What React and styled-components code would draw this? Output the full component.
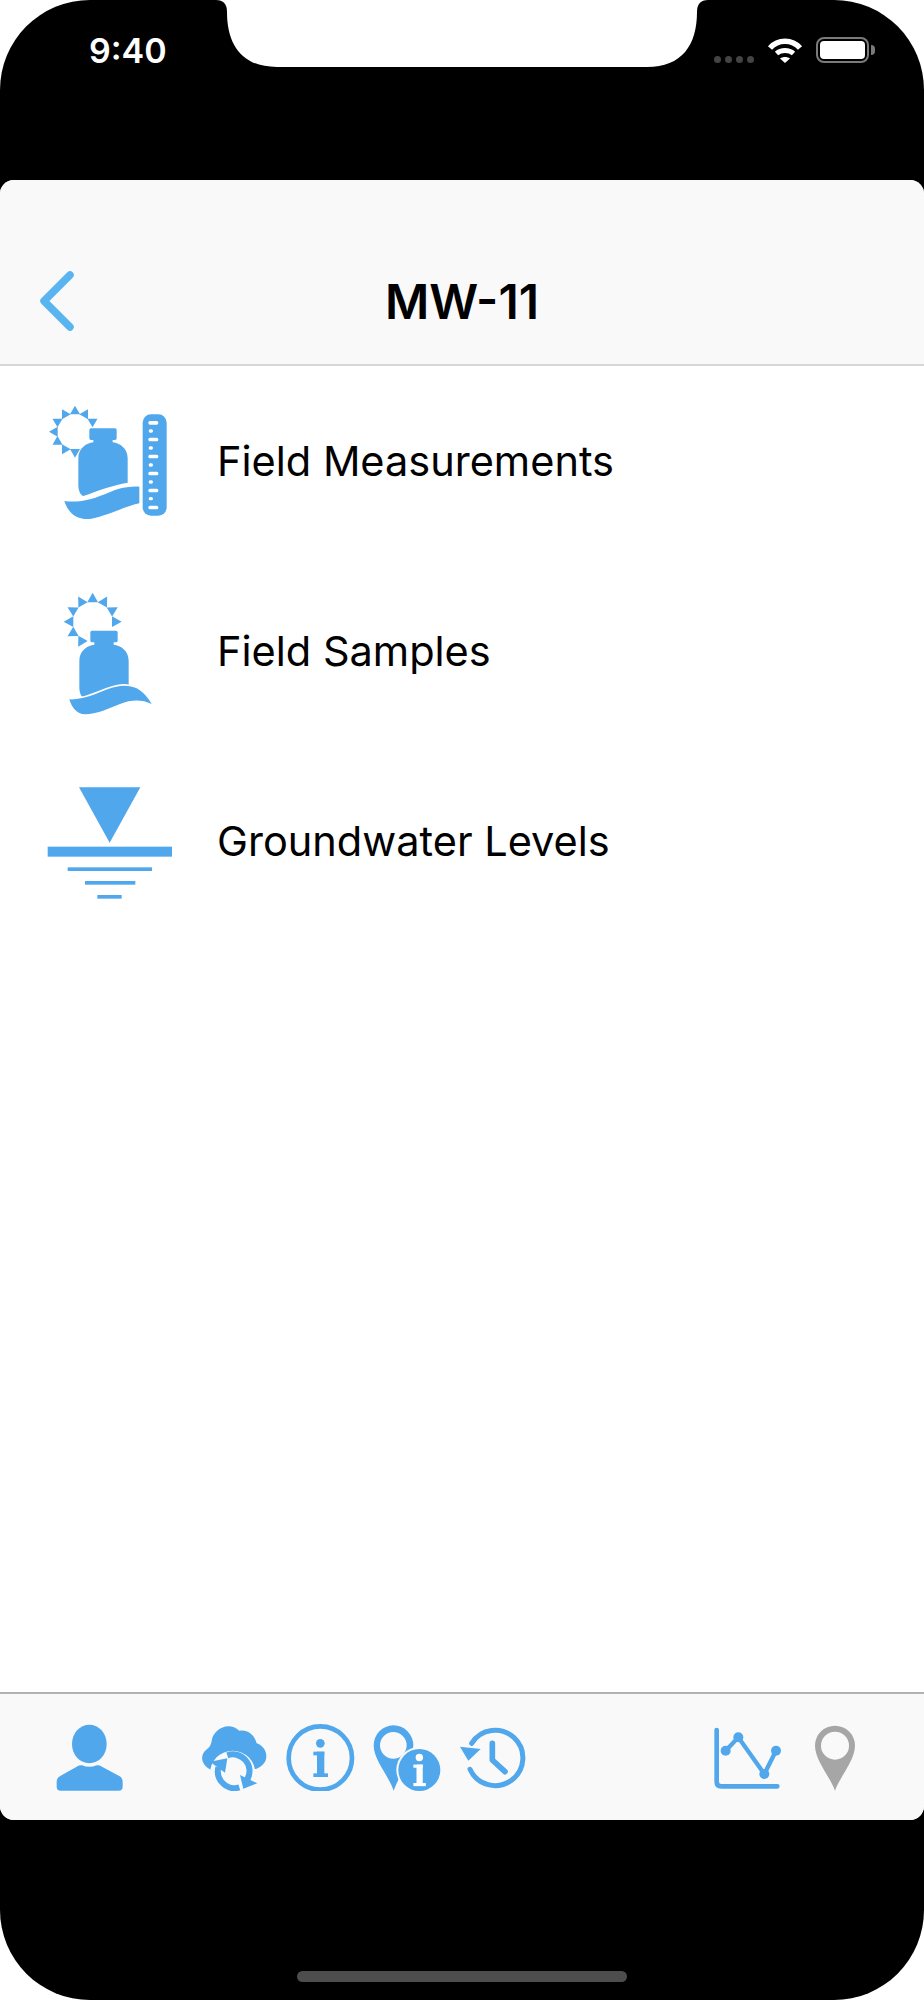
import styled, { createGlobalStyle } from 'styled-components'

const BLUE = '#51a7ec'
const BAR_BG = '#f9f9f9'

const GlobalStyle = createGlobalStyle`
  html, body {
    margin: 0;
    background: #fff;
  }
  * {
    box-sizing: border-box;
  }
`

// sun rays are the same triangle turned around a point
function SunRays({ cx, cy, inner, outer, half, angles }) {
  return angles.map((deg) => {
    const a = (deg * Math.PI) / 180
    const ux = Math.sin(a)
    const uy = -Math.cos(a)
    const pts = [
      [cx + ux * outer, cy + uy * outer],
      [cx + ux * inner - uy * half, cy + uy * inner + ux * half],
      [cx + ux * inner + uy * half, cy + uy * inner - ux * half],
    ]
    return <polygon key={deg} points={pts.map((p) => p.join(',')).join(' ')} fill={BLUE} />
  })
}

const BOTTLE =
  'M208 150q0-5 5-5H285q5 0 5 5V175q0 5-5 5H278V187C300 190 323 205 323 235V308C280 315 240 330 190 348C180 345 175 330 175 315V235C175 205 198 190 220 187V180H213q-5 0-5-5Z'

function MeasurementsIcon() {
  const marks = [128, 178, 229, 280, 331, 382]
  const dots = [153, 204, 255, 306, 356]
  return (
    <RowIcon viewBox="0 -42 570 570">
      <SunRays cx={165} cy={155} inner={52} outer={78} half={15} angles={[0, 30, 60, -30, -60, -90, -120, -150, 180]} />
      <path d={BOTTLE} fill={BLUE} />
      <Wave d="M133 363C180 370 225 355 265 338C295 325 325 318 358 320V370C310 380 270 405 210 417C170 420 145 400 133 363Z" />
      <rect x="368" y="103" width="72" height="304" rx="25" fill={BLUE} />
      {marks.map((y) => (
        <rect key={y} x="385" y={y - 5} width="30" height="11" rx="5" fill="#fff" />
      ))}
      {dots.map((y) => (
        <rect key={y} x="386" y={y - 5} width="13" height="10" rx="5" fill="#fff" />
      ))}
    </RowIcon>
  )
}

function SamplesIcon() {
  return (
    <RowIcon viewBox="0 -42 570 570">
      <SunRays cx={218} cy={155} inner={58} outer={87} half={16} angles={[0, 30, 60, 90, -30, -60, -90, -120, -150]} />
      <g transform="translate(3 37)">
        <path d={BOTTLE} fill={BLUE} />
      </g>
      <Wave d="M148 388C190 390 225 372 262 358C295 345 325 343 350 355C370 366 385 385 395 402C365 388 335 388 300 402C265 416 230 433 195 433C170 433 155 412 148 388Z" />
    </RowIcon>
  )
}

function LevelsIcon() {
  return (
    <RowIcon viewBox="0 -72 570 570">
      <polygon points="177,52 361,52 269,218" fill={BLUE} />
      <rect x="83" y="230" width="373" height="30" fill={BLUE} />
      <rect x="143" y="292" width="253" height="11" fill={BLUE} />
      <rect x="195" y="333" width="151" height="11" fill={BLUE} />
      <rect x="232" y="375" width="73" height="11" fill={BLUE} />
    </RowIcon>
  )
}

function PersonIcon() {
  return (
    <TabIcon viewBox="48 45 258 288">
      <ellipse cx="178" cy="192" rx="52" ry="58" fill={BLUE} />
      <path d="M80 305q0-12 12-18L140 260q8-5 16-4Q178 265 200 256q8-1 16 4L262 285q16 6 16 20V320q0 12-12 12H92q-12 0-12-12Z" fill={BLUE} />
    </TabIcon>
  )
}

function CloudSyncIcon() {
  return (
    <TabIcon viewBox="486 45 258 288">
      <path d="M540 268C515 255 508 228 528 210C538 202 543 196 545 182C550 148 595 122 628 152C650 148 672 160 680 190C705 198 718 228 702 250C696 258 688 263 680 266L560 290Z" fill={BLUE} />
      <circle cx="608" cy="280" r="68" fill={BAR_BG} />
      <path d="M628 322A50 50 0 0 1 565 262" fill="none" stroke={BLUE} strokeWidth="18" />
      <polygon points="540,245 592,235 585,278" fill={BLUE} />
      <path d="M592 226A50 50 0 0 1 652 298" fill="none" stroke={BLUE} strokeWidth="18" />
      <polygon points="630,285 682,310 640,326" fill={BLUE} />
    </TabIcon>
  )
}

function InfoGlyph({ x, y, scale = 1, color }) {
  return (
    <g transform={`translate(${x} ${y}) scale(${scale})`} fill={color}>
      <circle cx="0" cy="-44" r="13" />
      <rect x="-10" y="-19" width="22" height="70" />
      <rect x="-21" y="-19" width="33" height="11" />
      <rect x="-21" y="46" width="44" height="11" />
    </g>
  )
}

function InfoIcon() {
  return (
    <TabIcon viewBox="-6 45 258 288">
      <circle cx="121" cy="234" r="95" fill="none" stroke={BLUE} strokeWidth="14" />
      <InfoGlyph x={121} y={234} color={BLUE} />
    </TabIcon>
  )
}

function PinInfoIcon() {
  return (
    <TabIcon viewBox="252 45 258 288">
      <path
        fillRule="evenodd"
        d="M340 136A60 60 0 0 1 400 196C400 225 360 280 341 332C325 285 281 240 281 196A60 60 0 0 1 340 136ZM340 156A40 40 0 1 0 340 236A40 40 0 1 0 340 156Z"
        fill={BLUE}
      />
      <circle cx="418" cy="270" r="69" fill={BAR_BG} />
      <circle cx="418" cy="270" r="63" fill={BLUE} />
      <InfoGlyph x={418} y={270} scale={0.85} color="#fff" />
    </TabIcon>
  )
}

function HistoryIcon() {
  return (
    <TabIcon viewBox="510 45 258 288">
      <path d="M575 190A83 83 0 1 1 570 268" fill="none" stroke={BLUE} strokeWidth="15" strokeLinecap="round" />
      <polygon points="540,200 602,207 565,242" fill={BLUE} />
      <path d="M637 190V240L675 275" fill="none" stroke={BLUE} strokeWidth="17" strokeLinecap="round" strokeLinejoin="round" />
    </TabIcon>
  )
}

function ChartIcon() {
  return (
    <TabIcon viewBox="72 45 258 288">
      <path d="M110 150V305q0 14 14 14H292" fill="none" stroke={BLUE} strokeWidth="14" strokeLinecap="round" />
      <polyline points="137,212 175,172 253,282 288,212" fill="none" stroke={BLUE} strokeWidth="13" />
      {[[137, 212], [175, 172], [253, 282], [288, 212]].map(([cx, cy]) => (
        <circle key={cx} cx={cx} cy={cy} r="15" fill={BLUE} />
      ))}
    </TabIcon>
  )
}

function PinIcon() {
  return (
    <TabIcon viewBox="330 45 258 288">
      <path
        fillRule="evenodd"
        d="M465 137A60 60 0 0 1 525 197C525 240 480 290 465 332C450 290 405 240 405 197A60 60 0 0 1 465 137ZM465 155A42 42 0 1 0 465 239A42 42 0 1 0 465 155Z"
        fill="#a6a6a6"
      />
    </TabIcon>
  )
}

export default function App() {
  return (
    <>
      <GlobalStyle />
      <Phone>
        <StatusBar>
          <Time>9:40</Time>
          <Notch viewBox="0 0 500 67">
            <path d="M4 0Q15 0 15 12C15 45 30 67 65 67H435C470 67 485 45 485 12Q485 0 496 0Z" fill="#fff" />
          </Notch>
          <StatusIcons>
            <Signal>
              <i /><i /><i /><i />
            </Signal>
            <svg width="36" height="26" viewBox="0 0 36 26">
              <path d="M3 11C11 2 25 2 33 11" fill="none" stroke="#fff" strokeWidth="5.5" />
              <path d="M9.5 16.5C14 12.5 22 12.5 26.5 16.5" fill="none" stroke="#fff" strokeWidth="5" />
              <path d="M13 21.5C16 19.5 20 19.5 23 21.5L18 26Z" fill="#fff" />
            </svg>
            <Battery>
              <BatteryLevel />
            </Battery>
          </StatusIcons>
        </StatusBar>

        <Card>
          <Header>
            <BackButton width="34" height="60" viewBox="0 0 34 60">
              <path d="M30 4L4 30L30 56" fill="none" stroke="#5ab4f0" strokeWidth="7.5" strokeLinecap="round" strokeLinejoin="round" />
            </BackButton>
            <Title>MW-11</Title>
          </Header>

          <List>
            <Row>
              <MeasurementsIcon />
              <RowLabel>Field Measurements</RowLabel>
            </Row>
            <Row>
              <SamplesIcon />
              <RowLabel>Field Samples</RowLabel>
            </Row>
            <Row>
              <LevelsIcon />
              <RowLabel>Groundwater Levels</RowLabel>
            </Row>
          </List>

          <TabBar>
            <TabGroup>
              <PersonIcon />
            </TabGroup>
            <TabGroup>
              <CloudSyncIcon />
              <InfoIcon />
              <PinInfoIcon />
              <HistoryIcon />
            </TabGroup>
            <TabGroup>
              <ChartIcon />
              <PinIcon />
            </TabGroup>
          </TabBar>
        </Card>

        <HomeArea>
          <HomeBar />
        </HomeArea>
      </Phone>
    </>
  )
}

const Phone = styled.main`
  display: flex;
  flex-direction: column;
  width: 924px;
  height: 2000px;
  background: #000;
  border-radius: 90px;
  overflow: hidden;
`

const StatusBar = styled.header`
  display: grid;
  grid-template-columns: 212px 500px 212px;
  height: 180px;
  flex: none;
  align-items: start;
`

const Time = styled.span`
  padding: 30px 0 0 89px;
  color: #fff;
  font-family: Inter, 'Liberation Sans', sans-serif;
  font-size: 34px;
  font-weight: 600;
  line-height: 41px;
`

const Notch = styled.svg`
  display: block;
  width: 500px;
  height: 67px;
`

const StatusIcons = styled.div`
  display: flex;
  align-items: center;
  padding: 37px 0 0 2px;
  height: 63px;
  gap: 13px;
`

const Signal = styled.div`
  display: flex;
  gap: 4px;
  margin-top: 19px;

  i {
    display: block;
    width: 7px;
    height: 7px;
    border-radius: 50%;
    background: #444;
  }
`

const Battery = styled.div`
  position: relative;
  width: 53px;
  height: 26px;
  padding: 2px;
  border: 2px solid #7a7a7a;
  border-radius: 8px;

  &::after {
    content: '';
    position: absolute;
    top: 6px;
    right: -8px;
    width: 4px;
    height: 10px;
    border-radius: 0 4px 4px 0;
    background: #7a7a7a;
  }
`

const BatteryLevel = styled.div`
  height: 100%;
  border-radius: 4px;
  background: #fff;
`

const Card = styled.section`
  display: flex;
  flex-direction: column;
  height: 1640px;
  flex: none;
  border-radius: 14px;
  overflow: hidden;
  background: #fff;
`

const Header = styled.div`
  display: grid;
  grid-template-columns: 1fr auto 1fr;
  align-items: center;
  height: 186px;
  flex: none;
  padding: 58px 0 0 40px;
  background: ${BAR_BG};
  border-bottom: 2px solid #d6d6d6;
`

const BackButton = styled.svg`
  display: block;
`

const Title = styled.h1`
  margin: 2px 40px 0 0;
  color: #000;
  font-family: Inter, 'Liberation Sans', sans-serif;
  font-size: 48px;
  font-weight: 600;
  line-height: 58px;
`

const List = styled.div`
  flex: 1;
`

const Row = styled.div`
  display: flex;
  align-items: center;
  height: 190px;
  padding-left: 20px;
`

const RowIcon = styled.svg`
  display: block;
  width: 190px;
  height: 190px;
  flex: none;
  margin-right: 7px;
`

// white outline cuts the gap between the bottle and the wave
const Wave = styled.path`
  fill: ${BLUE};
  stroke: #fff;
  stroke-width: 10px;
  paint-order: stroke;
`

const RowLabel = styled.span`
  color: #000;
  font-family: Inter, 'Liberation Sans', sans-serif;
  font-size: 41.5px;
  font-weight: 400;
  line-height: 46px;
  margin-top: -1px;
`

const TabBar = styled.nav`
  display: grid;
  grid-template-columns: 146px 1fr auto;
  align-items: start;
  height: 128px;
  flex: none;
  padding: 1px 48px 0 46px;
  background: ${BAR_BG};
  border-top: 2px solid #b2b2b2;
`

const TabGroup = styled.div`
  display: flex;
`

const TabIcon = styled.svg`
  display: block;
  width: 86px;
  height: 96px;
  flex: none;
`

const HomeArea = styled.footer`
  display: flex;
  justify-content: center;
  flex: 1;
  padding-top: 151px;
`

const HomeBar = styled.div`
  width: 330px;
  height: 11px;
  border-radius: 6px;
  background: #4d4d4d;
`
